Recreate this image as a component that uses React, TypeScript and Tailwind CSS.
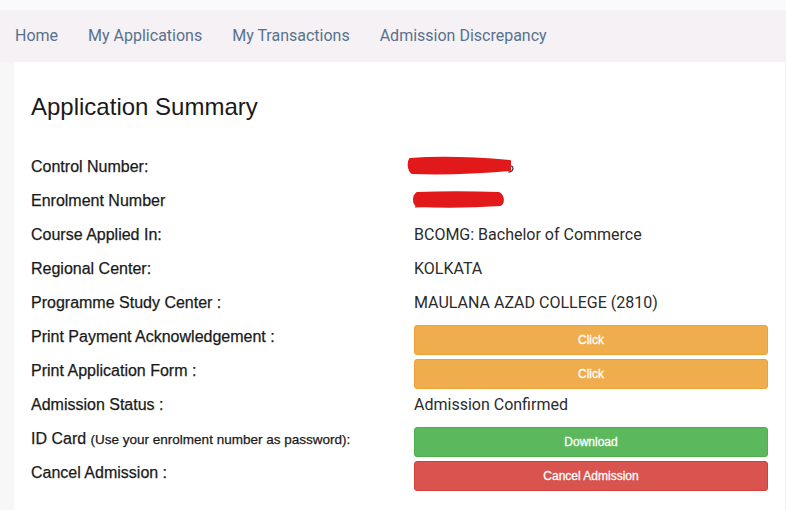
import React from "react";

const label =
  "font-['Liberation_Sans',Arial,sans-serif] text-[16px] text-[#1a1a1a] [-webkit-text-stroke:0.25px_#1a1a1a]";
const value = "font-['Roboto',sans-serif] text-[16px] text-[#2b2b2b]";
const btn =
  "mt-[5px] h-[30px] w-[354px] rounded-[3px] border text-[12px] text-white font-['Liberation_Sans',Arial,sans-serif] [-webkit-text-stroke:0.3px_#ffffff] flex items-center justify-center";

function Row({ l, children }: { l: React.ReactNode; children: React.ReactNode }) {
  return (
    <div className="flex h-[34px]">
      <div className={`w-[383px] shrink-0 leading-[34px] ${label}`}>{l}</div>
      <div className="flex-1">{children}</div>
    </div>
  );
}

function Scribble({ w, variant }: { w: number; variant: number }) {
  return (
    <svg width={w} height="20" viewBox={`0 0 ${w} 20`} className="block">
      {variant === 1 ? (
        <>
          <path d="M103 10 q4 -1 4 3 q-1 3 -5 3" fill="none" stroke="#333" strokeWidth="1.2" />
          <path
            d="M4 3 C30 1 70 2 104 5 L104 14 C70 17 35 18 6 17 C2 14 2 6 4 3 Z"
            fill="#e2191b"
            stroke="#e2191b"
            strokeWidth="2"
            strokeLinejoin="round"
          />
        </>
      ) : (
        <>
          <path d="M4 16 L14 15.5" stroke="#333" strokeWidth="1" />
          <path
            d="M6 2 C30 1 60 1 88 2 C93 5 93 12 89 14 C60 16 30 16 6 15 C2 12 2 5 6 2 Z"
            fill="#e2191b"
            stroke="#e2191b"
            strokeWidth="2"
            strokeLinejoin="round"
          />
        </>
      )}
    </svg>
  );
}

export default function App() {
  return (
    <div className="min-h-[510px] bg-[#fafafa] pt-[10px]">
      <nav className="flex h-[52px] items-center gap-[30px] bg-[#f6f1f4] pl-[15px] font-['Roboto',sans-serif] text-[16px] text-[#56718f]">
        <span>Home</span>
        <span>My Applications</span>
        <span>My Transactions</span>
        <span>Admission Discrepancy</span>
      </nav>
      <div className="flex min-h-[448px]">
        <div className="w-[14px] shrink-0 bg-[#f7f7f7]" />
        <main className="flex-1 border-r border-[#eeeeee] bg-white pl-[17px] pr-[16px] pt-[31px]">
          <h1 className="font-['Liberation_Sans',Arial,sans-serif] text-[24px] leading-[28px] text-[#1a1a1a]">
            Application Summary
          </h1>
          <div className="mt-[29px]">
            <Row l="Control Number:">
              <div className="ml-[-8px] pt-[6px]">
                <Scribble w={112} variant={1} />
              </div>
            </Row>
            <Row l="Enrolment Number">
              <div className="ml-[-3px] pt-[7px]">
                <Scribble w={96} variant={2} />
              </div>
            </Row>
            <Row l="Course Applied In:">
              <div className={`leading-[34px] ${value}`}>BCOMG: Bachelor of Commerce</div>
            </Row>
            <Row l="Regional Center:">
              <div className={`leading-[34px] ${value}`}>KOLKATA</div>
            </Row>
            <Row l="Programme Study Center :">
              <div className={`leading-[34px] ${value}`}>MAULANA AZAD COLLEGE (2810)</div>
            </Row>
            <Row l="Print Payment Acknowledgement :">
              <div className={`${btn} bg-[#f0ad4e] border-[#eea236]`}>Click</div>
            </Row>
            <Row l="Print Application Form :">
              <div className={`${btn} bg-[#f0ad4e] border-[#eea236]`}>Click</div>
            </Row>
            <Row l="Admission Status :">
              <div className={`leading-[34px] ${value}`}>Admission Confirmed</div>
            </Row>
            <Row
              l={
                <>
                  ID Card <span className="text-[13.5px]">(Use your enrolment number as password):</span>
                </>
              }
            >
              <div className={`${btn} bg-[#5cb85c] border-[#4cae4c]`}>Download</div>
            </Row>
            <Row l="Cancel Admission :">
              <div className={`${btn} bg-[#d9534f] border-[#d43f3a]`}>Cancel Admission</div>
            </Row>
          </div>
        </main>
      </div>
    </div>
  );
}
